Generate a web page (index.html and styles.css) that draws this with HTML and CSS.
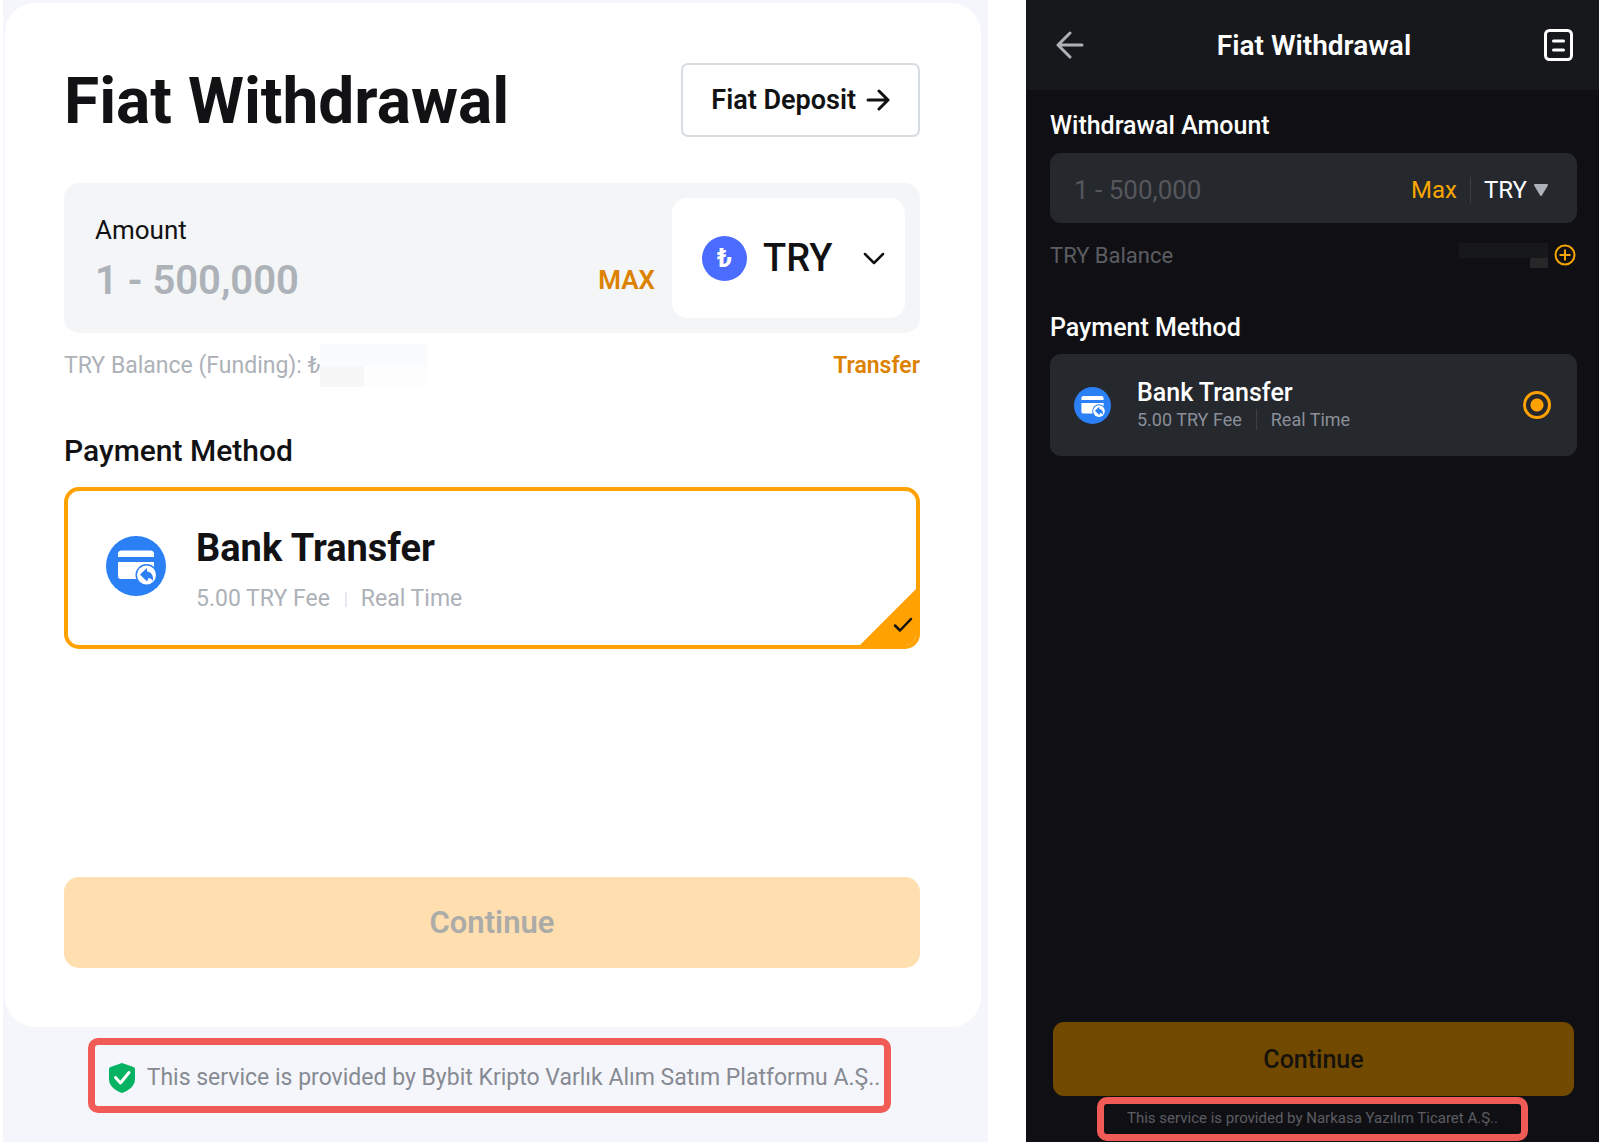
FILE: index.html
```html
<!DOCTYPE html>
<html lang="en">
<head>
    <meta charset="UTF-8">
    <meta name="viewport" content="width=device-width, initial-scale=1.0">
    <title>Fiat Withdrawal</title>
    <link rel="stylesheet" href="styles.css">
</head>
<body>
    <svg class="sprite" aria-hidden="true">
        <symbol id="bank-icon" viewBox="0 0 60 60">
            <circle cx="30" cy="30" r="30" fill="#2b80f5"/>
            <path d="M12 21v-3a3.500 3.500 0 0 1 3.500-3.500h29A3.500 3.500 0 0 1 48 18v3z" fill="#fff"/>
            <path d="M12 26h36v17H15a3 3 0 0 1-3-3z" fill="#fff"/>
            <circle cx="40.500" cy="39" r="11" fill="#2b80f5"/>
            <circle cx="40.500" cy="39" r="9.500" fill="#fff"/>
            <path d="M34 38.500l7-6.500v3.500c4.500.5 6.500 4 6 9.500-1.500-2.200-3-3-4.500-3l-1.500 3.500z" fill="#2b80f5"/>
        </symbol>
    </svg>

    <section class="web">
        <main class="card">
            <header class="card-header">
                <h1>Fiat Withdrawal</h1>
                <a href="#deposit" class="deposit-link">
                    Fiat Deposit
                    <svg width="24" height="22" viewBox="0 0 24 22" fill="none" stroke="currentColor" stroke-width="3" stroke-linecap="round" stroke-linejoin="round"><path d="M2 11h20M13 2l9 9-9 9"/></svg>
                </a>
            </header>

            <div class="amount-box">
                <div class="amount-field">
                    <label for="amount">Amount</label>
                    <input type="text" id="amount" placeholder="1 - 500,000">
                </div>
                <button type="button" class="max-button">MAX</button>
                <div class="currency">
                    <span class="currency-icon">₺</span>
                    <select aria-label="Currency">
                        <option>TRY</option>
                    </select>
                    <svg width="22" height="14" viewBox="0 0 22 14" fill="none" stroke="#121214" stroke-width="2.500" stroke-linecap="round" stroke-linejoin="round"><path d="M2 3l9 9 9-9"/></svg>
                </div>
            </div>

            <div class="balance">
                <span>TRY Balance (Funding): ₺</span>
                <span class="redacted"></span>
                <a href="#transfer">Transfer</a>
            </div>

            <h2>Payment Method</h2>
            <label class="method">
                <svg class="method-icon"><use href="#bank-icon"/></svg>
                <span class="method-text">
                    <span class="method-name">Bank Transfer</span>
                    <span class="method-info"><span>5.00 TRY Fee</span><span>Real Time</span></span>
                </span>
                <input type="radio" name="web-method" checked>
                <svg class="method-check" width="20" height="16" viewBox="0 0 20 16" fill="none" stroke="#121214" stroke-width="2.500" stroke-linecap="round" stroke-linejoin="round"><path d="M2 8.500l5 5L18 2"/></svg>
            </label>

            <button type="button" class="continue" disabled>Continue</button>
        </main>

        <footer class="notice">
            <svg width="26" height="30" viewBox="0 0 26 30"><path d="M13 0l11.500 4Q26 4.500 26 6v10c0 7-6 11.500-13 14C6 27.500 0 23 0 16V6q0-1.500 1.500-2z" fill="#06b363"/><path d="M6.500 14.500l5 5.500L20 9.500" fill="none" stroke="#fff" stroke-width="3" stroke-linecap="round" stroke-linejoin="round"/></svg>
            <span>This service is provided by Bybit Kripto Varlık Alım Satım Platformu A.Ş..</span>
        </footer>
    </section>

    <section class="app">
        <header class="app-bar">
            <button type="button" aria-label="Back">
                <svg width="28" height="28" viewBox="0 0 28 28" fill="none" stroke="#adb1b8" stroke-width="3" stroke-linecap="round" stroke-linejoin="round"><path d="M26 14H2M14 2L2 14l12 12"/></svg>
            </button>
            <h1>Fiat Withdrawal</h1>
            <button type="button" aria-label="Orders">
                <svg width="29" height="32" viewBox="0 0 29 32" fill="none" stroke="#fff" stroke-width="3" stroke-linecap="round"><rect x="1.500" y="1.500" width="26" height="29" rx="4"/><path d="M9.500 12h10M9.500 21h10"/></svg>
            </button>
        </header>

        <main class="app-body">
            <label class="app-label" for="app-amount">Withdrawal Amount</label>
            <div class="app-input">
                <input type="text" id="app-amount" placeholder="1 - 500,000">
                <button type="button">Max</button>
                <div class="app-currency">
                    <select aria-label="Currency">
                        <option>TRY</option>
                    </select>
                    <svg width="16" height="12" viewBox="0 0 16 12"><path d="M2 1h12L8 11z" fill="#adb1b8" stroke="#adb1b8" stroke-width="2" stroke-linejoin="round"/></svg>
                </div>
            </div>

            <div class="app-balance">
                <span>TRY Balance</span>
                <span class="app-redacted"></span>
                <button type="button" aria-label="Add funds">
                    <svg width="22" height="22" viewBox="0 0 22 22" fill="none" stroke="#f7a600" stroke-width="2"><circle cx="11" cy="11" r="9.500"/><path d="M11 5.500v11M5.500 11h11"/></svg>
                </button>
            </div>

            <h2>Payment Method</h2>
            <label class="app-method">
                <svg class="app-method-icon"><use href="#bank-icon"/></svg>
                <span class="app-method-text">
                    <span class="app-method-name">Bank Transfer</span>
                    <span class="app-method-info"><span>5.00 TRY Fee</span><span>Real Time</span></span>
                </span>
                <input type="radio" name="app-method" checked>
            </label>

            <button type="button" class="app-continue" disabled>Continue</button>
        </main>

        <footer class="app-notice">This service is provided by Narkasa Yazılım Ticaret A.Ş..</footer>
    </section>
</body>
</html>
```

FILE: styles.css
```css
:root {
    --text: #121214;
    --muted: #adb1b8;
    --brand: #ffa100;
    --brand-dark: #dd8200;
    --page-bg: #f5f6fb;
    --field-bg: #f3f5f7;
    --dark-bg: #101014;
    --dark-bar: #17181c;
    --dark-field: #25282d;
    --highlight: #f15b55;
}

* {
    box-sizing: border-box;
}

body {
    display: grid;
    grid-template-columns: 985fr 573fr;
    gap: 38px;
    min-height: 100vh;
    margin: 0;
    padding: 0 1px 0 3px;
    background: #fff;
    color: var(--text);
    font-family: Roboto, "Noto Sans", sans-serif;
}

h1, h2 {
    margin: 0;
}

button, input, select {
    margin: 0;
    padding: 0;
    border: none;
    background: none;
    color: inherit;
    font: inherit;
}

select, input[type="radio"] {
    appearance: none;
}

a {
    color: inherit;
    text-decoration: none;
}

svg {
    display: block;
    flex: none;
}

.sprite {
    position: absolute;
    width: 0;
    height: 0;
}

/* Web form */
.web {
    display: flex;
    flex-direction: column;
    padding: 3px 7px 29px 2px;
    background: var(--page-bg);
}

.card {
    display: flex;
    flex: 1;
    flex-direction: column;
    padding: 60px 61px 59px 59px;
    border-radius: 30px;
    background: #fff;
}

.card-header {
    display: flex;
    align-items: center;
    justify-content: space-between;
    margin-bottom: 46px;
}

.card-header h1 {
    padding-top: 4px;
    font-size: 64px;
    font-weight: 700;
    line-height: 70px;
}

.deposit-link {
    display: flex;
    align-items: center;
    gap: 10px;
    height: 74px;
    padding: 0 28px;
    border: 2px solid #d7dce3;
    border-radius: 7px;
    font-size: 27px;
    font-weight: 600;
}

.amount-box {
    display: flex;
    align-items: center;
    padding: 15px;
    border-radius: 15px;
    background: var(--field-bg);
}

.amount-field {
    display: flex;
    flex: 1;
    flex-direction: column;
    min-width: 0;
    padding-left: 16px;
}

.amount-field label {
    font-size: 26px;
    line-height: 44px;
}

.amount-field input {
    width: 100%;
    height: 56px;
    font-size: 40px;
    font-weight: 600;
}

.amount-field input::placeholder {
    color: var(--muted);
}

.max-button {
    align-self: flex-end;
    margin: 0 17px 22px;
    color: var(--brand-dark);
    font-size: 26px;
    font-weight: 600;
    line-height: 32px;
}

.currency {
    display: flex;
    align-items: center;
    width: 233px;
    height: 120px;
    padding: 0 20px 0 30px;
    border-radius: 15px;
    background: #fff;
}

.currency-icon {
    width: 45px;
    height: 45px;
    border-radius: 50%;
    background: #4a6cff;
    color: #fff;
    font-size: 26px;
    font-weight: 700;
    line-height: 45px;
    text-align: center;
}

.currency select {
    flex: 1;
    min-width: 0;
    margin-left: 16px;
    font-size: 38px;
    font-weight: 500;
}

.balance {
    display: flex;
    align-items: center;
    height: 65px;
    color: var(--muted);
    font-size: 23px;
}

.balance a {
    margin-left: auto;
    color: var(--brand-dark);
    font-weight: 600;
}

.redacted {
    width: 108px;
    height: 43px;
    background: linear-gradient(90deg, #f7f7f7 44px, #fdfdfd 44px) bottom / 100% 21px no-repeat, #fafbfc;
}

.card h2 {
    margin: 34px 0 17px;
    font-size: 30px;
    font-weight: 500;
    line-height: 38px;
}

.method {
    position: relative;
    display: flex;
    align-items: center;
    height: 162px;
    padding: 0 38px 4px;
    overflow: hidden;
    border: 4px solid var(--brand);
    border-radius: 15px;
}

.method-icon {
    width: 60px;
    height: 60px;
    margin-right: 30px;
}

.method-text {
    display: flex;
    flex-direction: column;
    gap: 12px;
    padding-top: 8px;
}

.method-name {
    font-size: 38px;
    font-weight: 700;
    line-height: 46px;
}

.method-info {
    display: flex;
    align-items: center;
    color: var(--muted);
    font-size: 23px;
    line-height: 32px;
}

.method-info span + span {
    margin-left: 15px;
    padding-left: 16px;
    background: linear-gradient(#e6e9ef, #e6e9ef) left center / 2px 15px no-repeat;
}

.method input {
    position: absolute;
    right: 0;
    bottom: 0;
    width: 56px;
    height: 56px;
    background: var(--brand);
    clip-path: polygon(100% 0, 100% 100%, 0 100%);
}

.method-check {
    position: absolute;
    right: 3px;
    bottom: 12px;
}

.continue {
    height: 91px;
    margin-top: auto;
    border-radius: 15px;
    background: #ffdeb0;
    color: #ababa8;
    font-size: 31px;
    font-weight: 600;
}

.notice {
    display: flex;
    align-items: center;
    align-self: center;
    gap: 12px;
    height: 75px;
    margin: 11px 7px 0 0;
    padding: 4px 4px 0 14px;
    border: 7px solid var(--highlight);
    border-radius: 10px;
    color: #868a92;
    font-size: 23px;
}

/* Mobile app */
.app {
    display: flex;
    flex-direction: column;
    padding-bottom: 1px;
    background: var(--dark-bg);
    color: #fff;
}

.app-bar {
    display: flex;
    align-items: center;
    justify-content: space-between;
    height: 90px;
    padding: 0 26px 0 30px;
    background: var(--dark-bar);
}

.app-bar h1 {
    font-size: 28px;
    font-weight: 600;
}

.app-body {
    display: flex;
    flex: 1;
    flex-direction: column;
    padding: 20px 22px 0 24px;
}

.app-label, .app-body h2 {
    font-size: 25px;
    font-weight: 500;
    line-height: 32px;
}

.app-input {
    display: flex;
    align-items: center;
    height: 70px;
    margin-top: 11px;
    padding: 4px 28px 0 24px;
    border-radius: 11px;
    background: var(--dark-field);
    font-size: 24px;
}

.app-input input {
    flex: 1;
    min-width: 0;
    font-size: 26px;
}

.app-input input::placeholder {
    color: #55575c;
}

.app-input button {
    color: #f7a600;
}

.app-currency {
    display: flex;
    align-items: center;
    gap: 6px;
    margin-left: 13px;
    padding-left: 13px;
    border-left: 1px solid #3c3f45;
    line-height: 26px;
}

.app-balance {
    display: flex;
    align-items: center;
    height: 64px;
    color: #5c5d62;
    font-size: 22px;
}

.app-redacted {
    width: 89px;
    height: 25px;
    margin: 0 6px 0 auto;
    background: linear-gradient(#272727, #272727) right bottom / 18px 10px no-repeat, linear-gradient(#16181b, #16181b) top / 100% 15px no-repeat;
}

.app-balance button {
    margin-right: 1px;
}

.app-body h2 {
    margin: 25px 0 10px;
}

.app-method {
    display: flex;
    align-items: center;
    height: 102px;
    padding: 0 26px 0 24px;
    border-radius: 11px;
    background: var(--dark-field);
}

.app-method-icon {
    width: 37px;
    height: 37px;
    margin-right: 26px;
}

.app-method-text {
    display: flex;
    flex: 1;
    flex-direction: column;
}

.app-method-name {
    font-size: 25px;
    font-weight: 500;
    line-height: 30px;
}

.app-method-info {
    color: #8b8f99;
    font-size: 18px;
    line-height: 24px;
}

.app-method-info span + span {
    margin-left: 14px;
    padding-left: 14px;
    border-left: 1px solid #3c3f45;
}

.app-method input {
    width: 28px;
    height: 28px;
    border: 3px solid var(--brand);
    border-radius: 50%;
    background: radial-gradient(circle, var(--brand) 6px, transparent 7px);
}

.app-continue {
    height: 74px;
    margin: auto 3px 0;
    border-radius: 11px;
    background: #714a00;
    color: #17130c;
    font-size: 25px;
    font-weight: 500;
}

.app-notice {
    align-self: center;
    height: 44px;
    margin-top: 1px;
    padding: 0 23px;
    border: 7px solid var(--highlight);
    border-radius: 10px;
    color: #5c5d62;
    font-size: 15px;
    line-height: 28px;
}
```
